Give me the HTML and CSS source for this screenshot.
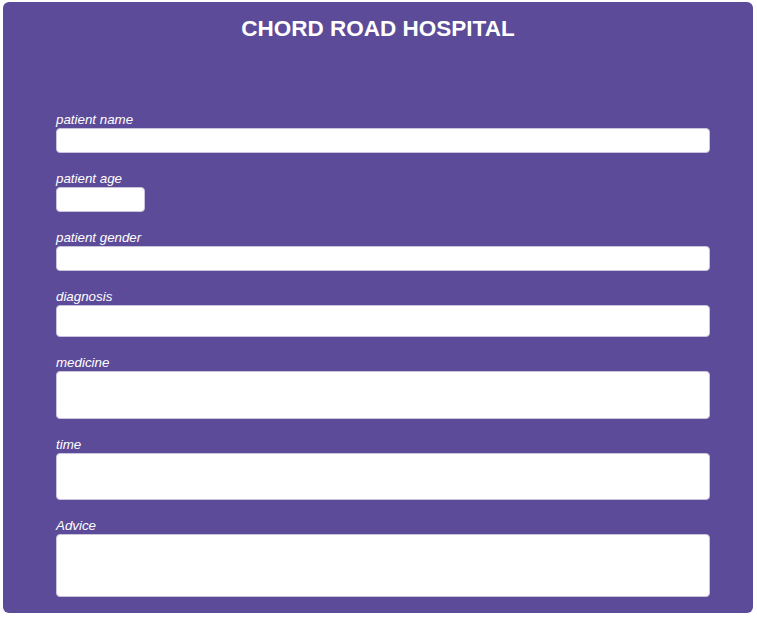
FILE: index.html
```html
<!DOCTYPE html>
<html>
<head>
<meta charset="utf-8">
<link rel="stylesheet" href="styles.css">
</head>
<body>
<div class="card">
  <h1 class="title">CHORD ROAD HOSPITAL</h1>
  <form class="form">
    <div class="field">
      <label class="label">patient name</label>
      <input class="input h25" type="text">
    </div>
    <div class="field">
      <label class="label">patient age</label>
      <input class="input h25 short" type="text">
    </div>
    <div class="field">
      <label class="label">patient gender</label>
      <input class="input h25" type="text">
    </div>
    <div class="field">
      <label class="label">diagnosis</label>
      <input class="input h32" type="text">
    </div>
    <div class="field">
      <label class="label">medicine</label>
      <textarea class="input h48"></textarea>
    </div>
    <div class="field">
      <label class="label">time</label>
      <textarea class="input h47"></textarea>
    </div>
    <div class="field">
      <label class="label">Advice</label>
      <textarea class="input h63"></textarea>
    </div>
  </form>
</div>
</body>
</html>
```
FILE: styles.css
```css
html, body {
  margin: 0;
  padding: 0;
  background: #ffffff;
}
body {
  font-family: "Liberation Sans", Arial, sans-serif;
}
.card {
  box-sizing: border-box;
  width: 750px;
  height: 611px;
  margin: 2px 0 0 3px;
  background: #5c4b99;
  border-radius: 6px;
  padding-top: 14px;
}
.title {
  margin: 0;
  text-align: center;
  color: #ffffff;
  font-size: 22.5px;
  font-weight: bold;
  line-height: 25px;
}
.form {
  padding: 71px 0 0 53px;
}
.field {
  margin-top: 18px;
}
.field:first-child {
  margin-top: 0;
}
.label {
  display: block;
  color: #ffffff;
  font-style: italic;
  font-size: 13.33px;
  line-height: 16px;
}
.input {
  display: block;
  box-sizing: border-box;
  width: 654px;
  margin: 0;
  padding: 2px 4px;
  background: #ffffff;
  border: 1px solid #c9c4dc;
  border-radius: 4px;
  resize: none;
  font-family: "Liberation Sans", Arial, sans-serif;
}
.short { width: 89px; }
.h25 { height: 25px; }
.h32 { height: 32px; }
.h48 { height: 48px; }
.h47 { height: 47px; }
.h63 { height: 63px; }
```
